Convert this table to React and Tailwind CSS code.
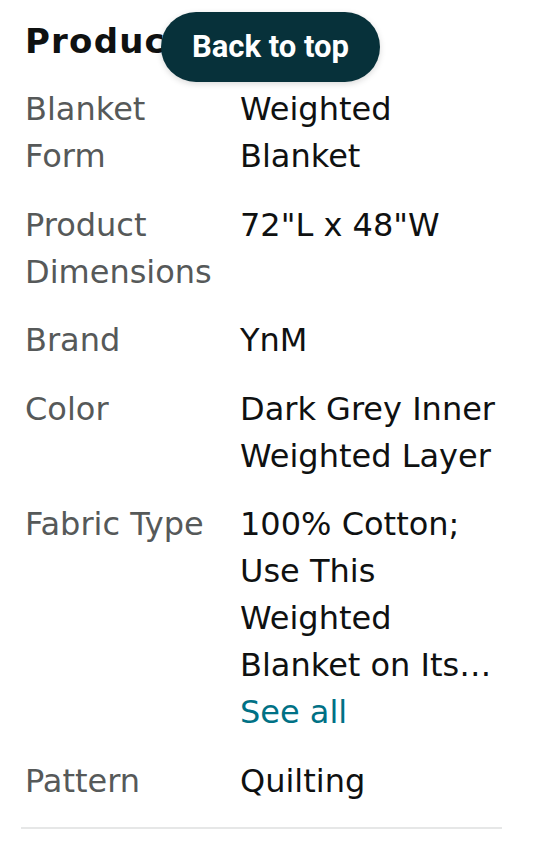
export default function App() {
  const rows = [
    ["Blanket Form", "Weighted Blanket"],
    ["Product Dimensions", '72"L x 48"W'],
    ["Brand", "YnM"],
    ["Color", "Dark Grey Inner Weighted Layer"],
  ];
  return (
    <div className="relative w-[540px] h-[841px] overflow-hidden bg-white" style={{ fontFamily: '"DejaVu Sans", Verdana, sans-serif' }}>
      <div className="pl-[25px] pt-[21px]">
        <h2 className="text-[34px] leading-[40px] font-bold tracking-[1.2px] text-[#0f1111]">Product details</h2>
        <div className="mt-[25px] flex flex-col gap-[21.5px] text-[32px] leading-[47px]">
          {rows.map(([k, v]) => (
            <div key={k} className="flex">
              <div className="w-[200px] mr-[15px] shrink-0 text-[#565959]">{k}</div>
              <div className="w-[266px] text-[#0f1111]">{v}</div>
            </div>
          ))}
          <div className="flex">
            <div className="w-[200px] mr-[15px] shrink-0 text-[#565959]">Fabric Type</div>
            <div className="w-[266px] text-[#0f1111]">
              <div>100% Cotton; Use This Weighted Blanket on Its…</div>
              <div className="text-[#007185]">See all</div>
            </div>
          </div>
          <div className="flex">
            <div className="w-[200px] mr-[15px] shrink-0 text-[#565959]">Pattern</div>
            <div className="w-[266px] text-[#0f1111]">Quilting</div>
          </div>
        </div>
        <div className="mt-[22px] -ml-[4px] w-[481px] h-[2px] bg-[#e6e7e7]" />
      </div>
      <button
        className="absolute left-[161px] top-[12px] w-[219px] h-[70px] rounded-full bg-[#07313a] text-white text-[31px] font-bold shadow-[0_2px_6px_rgba(0,0,0,0.15)]"
        style={{ fontFamily: 'Roboto, sans-serif' }}
      >
        Back to top
      </button>
    </div>
  );
}
